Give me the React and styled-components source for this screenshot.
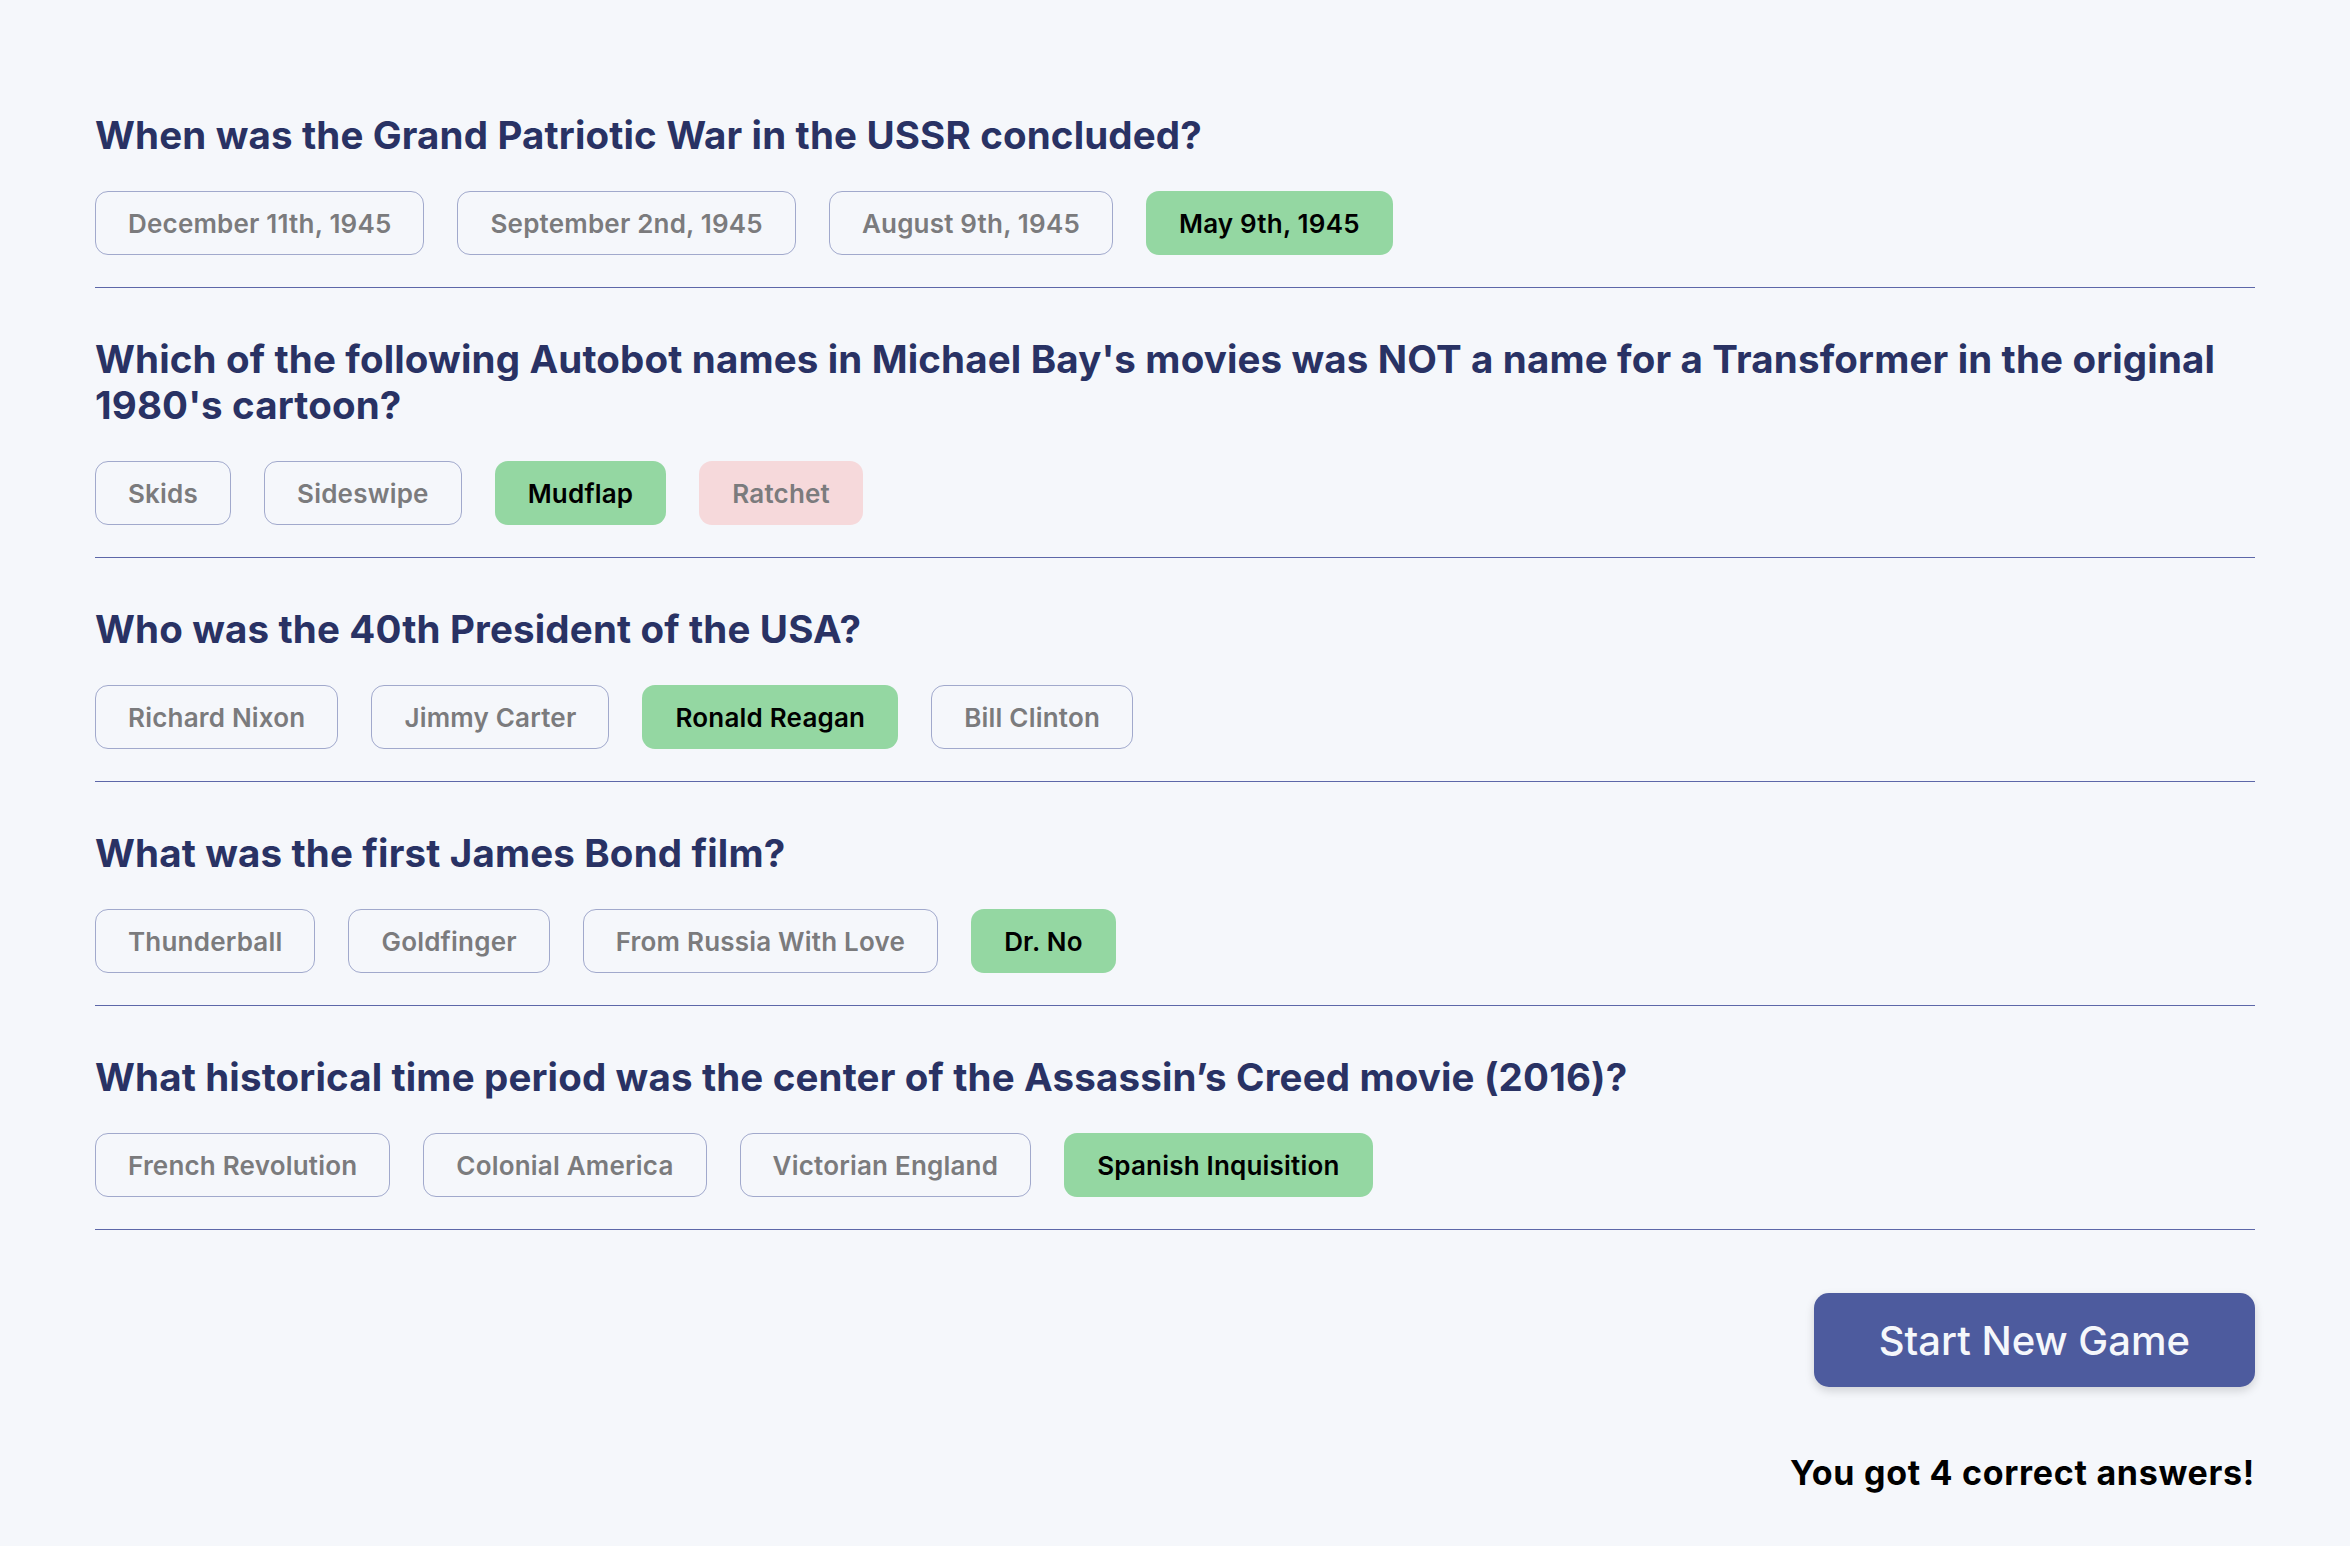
import styled, { createGlobalStyle } from 'styled-components';

const GlobalStyle = createGlobalStyle`
  html, body {
    margin: 0;
    padding: 0;
    background: #f5f7fb;
  }
  body {
    font-family: Inter, "Noto Sans", sans-serif;
  }
`;

const Page = styled.main`
  min-height: 1546px;
  box-sizing: border-box;
  padding-top: 64px;
  background: #f5f7fb;
`;

const Container = styled.div`
  max-width: 2160px;
  margin: 0 auto;
`;

const Section = styled.section`
  padding: 48px 0 32px;
  border-bottom: 1px solid #5d67a8;
`;

const Question = styled.h2`
  margin: 0;
  font-family: Inter, sans-serif;
  font-weight: 700;
  font-size: 38.5px;
  line-height: 46px;
  letter-spacing: 0.15px;
  color: #293264;
`;

const Answers = styled.div`
  display: flex;
  gap: 33px;
  margin-top: 33px;
`;

const Answer = styled.button`
  height: 64px;
  padding: 0 32px;
  box-sizing: border-box;
  border-radius: 13px;
  font-family: Inter, sans-serif;
  font-weight: 600;
  font-size: 26px;
  letter-spacing: 0.2px;
  cursor: pointer;
  border: 1px solid
    ${(p) => (p.$state === 'none' ? 'rgba(77, 91, 158, 0.5)' : 'transparent')};
  background: ${(p) =>
    p.$state === 'correct' ? '#94d7a2' : p.$state === 'wrong' ? '#f6d9db' : 'transparent'};
  color: ${(p) => (p.$state === 'correct' ? '#000' : '#7b7b7d')};
`;

const Footer = styled.div`
  display: flex;
  flex-direction: column;
  align-items: flex-end;
  padding-top: 63px;
`;

const NewGame = styled.button`
  height: 94px;
  padding: 0 65px;
  border: none;
  border-radius: 15px;
  background: #4d5b9e;
  color: #f5f7fb;
  font-family: Inter, sans-serif;
  font-weight: 500;
  font-size: 40px;
  cursor: pointer;
  box-shadow: 0 4px 10px rgba(0, 0, 0, 0.15);
`;

const Score = styled.p`
  margin: 65px 0 0;
  font-family: Inter, sans-serif;
  font-weight: 700;
  font-size: 34px;
  letter-spacing: 0.7px;
  color: #000;
`;

const quiz = [
  {
    q: 'When was the Grand Patriotic War in the USSR concluded?',
    a: ['December 11th, 1945', 'September 2nd, 1945', 'August 9th, 1945', 'May 9th, 1945'],
    correct: 3,
  },
  {
    q: "Which of the following Autobot names in Michael Bay's movies was NOT a name for a Transformer in the original 1980's cartoon?",
    a: ['Skids', 'Sideswipe', 'Mudflap', 'Ratchet'],
    correct: 2,
    picked: 3,
  },
  {
    q: 'Who was the 40th President of the USA?',
    a: ['Richard Nixon', 'Jimmy Carter', 'Ronald Reagan', 'Bill Clinton'],
    correct: 2,
  },
  {
    q: 'What was the first James Bond film?',
    a: ['Thunderball', 'Goldfinger', 'From Russia With Love', 'Dr. No'],
    correct: 3,
  },
  {
    q: 'What historical time period was the center of the Assassin’s Creed movie (2016)?',
    a: ['French Revolution', 'Colonial America', 'Victorian England', 'Spanish Inquisition'],
    correct: 3,
  },
];

export default function App() {
  return (
    <>
      <GlobalStyle />
      <Page>
        <Container>
          {quiz.map((item) => (
            <Section key={item.q}>
              <Question>{item.q}</Question>
              <Answers>
                {item.a.map((ans, i) => {
                  let state = 'none';
                  if (i === item.correct) state = 'correct';
                  else if (i === item.picked) state = 'wrong';
                  return (
                    <Answer key={ans} $state={state}>
                      {ans}
                    </Answer>
                  );
                })}
              </Answers>
            </Section>
          ))}
          <Footer>
            <NewGame>Start New Game</NewGame>
            <Score>You got 4 correct answers!</Score>
          </Footer>
        </Container>
      </Page>
    </>
  );
}
